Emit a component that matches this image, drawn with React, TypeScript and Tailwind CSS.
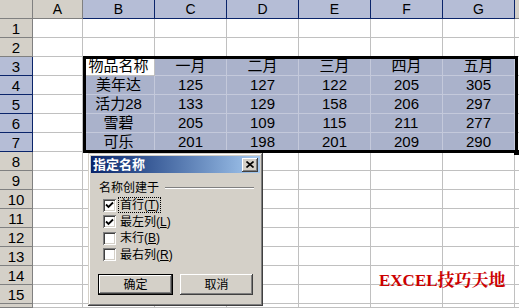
import React from "react";

const COLS = ["A", "B", "C", "D", "E", "F", "G"];
const ROWS = Array.from({ length: 16 }, (_, i) => i + 1);

const DATA: string[][] = [
  ["物品名称", "一月", "二月", "三月", "四月", "五月"],
  ["美年达", "125", "127", "122", "205", "305"],
  ["活力28", "133", "129", "158", "206", "297"],
  ["雪碧", "205", "109", "115", "211", "277"],
  ["可乐", "201", "198", "201", "209", "290"],
];

const isSelRow = (r: number) => r >= 3 && r <= 7;
const isSelCol = (c: number) => c >= 1 && c <= 6;

function Check() {
  return (
    <svg width="9" height="8" viewBox="0 0 9 8" className="block">
      <path d="M1 3.5 L3.5 6 L8 1.5" stroke="#000" strokeWidth="1.8" fill="none" />
    </svg>
  );
}

function CheckRow({ checked, label, hot, focus }: { checked: boolean; label: string; hot: string; focus?: boolean }) {
  return (
    <div className="flex h-[16.5px] items-center">
      <div className="flex h-[13px] w-[13px] items-center justify-center bg-white shadow-[inset_1px_1px_#808080,inset_-1px_-1px_#fff,inset_2px_2px_#404040,inset_-2px_-2px_#d4d0c8]">
        {checked && <Check />}
      </div>
      <span
        className={
          "ml-[2px] px-[1px] text-[12px] leading-[14px] " +
          (focus ? "border border-dotted border-black" : "border border-transparent")
        }
      >
        {label}(<span className="underline">{hot}</span>)
      </span>
    </div>
  );
}

function NameDialog() {
  return (
    <div className="absolute left-[88px] top-[153px] flex h-[153px] w-[175px] flex-col bg-[#d4d0c8] p-[3px] shadow-[inset_-1px_-1px_#404040,inset_1px_1px_#d4d0c8,inset_-2px_-2px_#808080,inset_2px_2px_#fff]">
      <div className="flex h-[17px] items-center justify-between bg-gradient-to-r from-[#0a246a] to-[#a6caf0] pl-[2px] pr-[2px]">
        <span className="text-[13px] font-bold leading-none text-white">指定名称</span>
        <div className="flex h-[14px] w-[16px] items-center justify-center bg-[#d4d0c8] shadow-[inset_-1px_-1px_#404040,inset_1px_1px_#fff,inset_-2px_-2px_#808080]">
          <svg width="8" height="7" viewBox="0 0 8 7" className="block">
            <path d="M0.5 0.5 L7.5 6.5 M7.5 0.5 L0.5 6.5" stroke="#000" strokeWidth="1.6" />
          </svg>
        </div>
      </div>

      <div className="mt-[8px] flex items-center pl-[8px] pr-[6px]">
        <span className="text-[12px] leading-[14px]">名称创建于</span>
        <div className="ml-[6px] h-[2px] flex-1 border-t border-b border-t-[#808080] border-b-white" />
      </div>

      <div className="mt-[2px] flex flex-col pl-[12px]">
        <CheckRow checked label="首行" hot="T" focus />
        <CheckRow checked label="最左列" hot="L" />
        <CheckRow checked={false} label="末行" hot="B" />
        <CheckRow checked={false} label="最右列" hot="R" />
      </div>

      <div className="mt-[11px] flex gap-[7px] pl-[7px]">
        <button className="flex h-[21px] w-[75px] items-center justify-center border border-black bg-[#d4d0c8] text-[12px] shadow-[inset_-1px_-1px_#404040,inset_1px_1px_#fff,inset_-2px_-2px_#808080]">
          确定
        </button>
        <button className="flex h-[21px] w-[73px] items-center justify-center bg-[#d4d0c8] text-[12px] shadow-[inset_-1px_-1px_#404040,inset_1px_1px_#fff,inset_-2px_-2px_#808080]">
          取消
        </button>
      </div>
    </div>
  );
}

export default function App() {
  return (
    <div className="relative h-[308px] w-[519px] overflow-hidden bg-white font-['Liberation_Sans','Noto_Sans_CJK_SC',sans-serif] text-black">
      <div className="grid h-full grid-cols-[33px_50px_repeat(6,72px)_1fr] grid-rows-[19px_repeat(15,19px)_1fr]">
        {/* header row */}
        <div className="border-b border-r border-[#808080] bg-[#d4d0c8]" />
        {COLS.map((c, i) => (
          <div
            key={c}
            className={
              "flex items-center justify-center border-b border-r text-[14px] leading-none " +
              (isSelCol(i) ? "border-[#0a246a] bg-[#b5bdd6]" : "border-[#808080] bg-[#d4d0c8]")
            }
          >
            {c}
          </div>
        ))}
        <div className="border-b border-[#808080] bg-[#d4d0c8]" />

        {ROWS.map((r) => (
          <React.Fragment key={r}>
            <div
              className={
                "flex items-center justify-center border-b border-r text-[15px] leading-none " +
                (isSelRow(r) ? "border-[#0a246a] bg-[#b5bdd6]" : "border-[#808080] bg-[#d4d0c8]")
              }
            >
              {r <= 15 ? r : ""}
            </div>
            {COLS.map((c, ci) => {
              const sel = isSelRow(r) && isSelCol(ci);
              const active = r === 3 && ci === 1;
              const text = sel ? DATA[r - 3][ci - 1] : "";
              return (
                <div
                  key={c}
                  className={
                    "flex items-center justify-center overflow-visible whitespace-nowrap border-b border-r text-[15px] leading-[18px] " +
                    (active
                      ? "border-[#c0c0c0] bg-white"
                      : sel
                      ? "border-[#c4c9db] bg-[#aab2cb]"
                      : "border-[#c0c0c0] bg-white")
                  }
                >
                  {text}
                </div>
              );
            })}
            <div className="border-b border-[#c0c0c0] bg-white" />
          </React.Fragment>
        ))}
      </div>

      {/* selection outline */}
      <div className="pointer-events-none absolute left-[83px] top-[56px] h-[97px] w-[435px] border-[3px] border-black" />
      <div className="absolute left-[514px] top-[150px] h-[5px] w-[5px] bg-black" />

      <NameDialog />

      <div className="absolute left-[379px] top-[271px] whitespace-nowrap font-['Liberation_Serif','Noto_Serif_CJK_SC','Noto_Sans_CJK_SC',serif] text-[17px] font-bold leading-[20px] text-[#cc0000]">
        EXCEL技巧天地
      </div>
    </div>
  );
}
